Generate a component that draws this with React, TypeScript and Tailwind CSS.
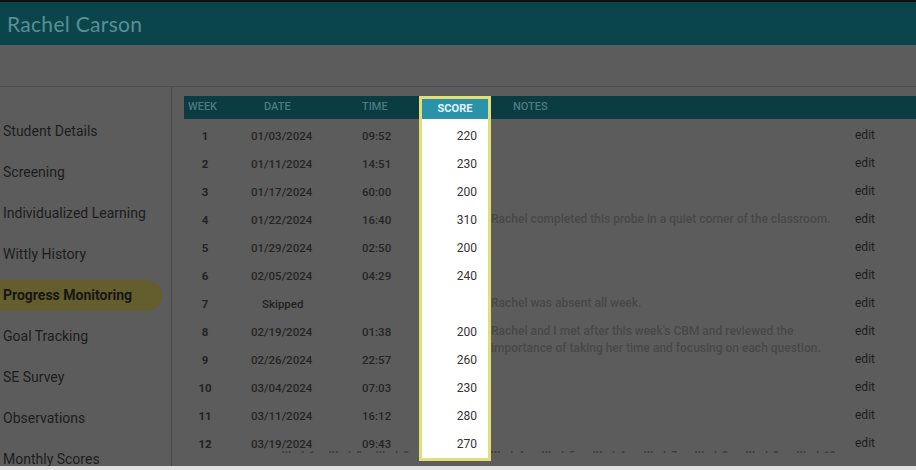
import React from 'react';

type Row = {
  week: number;
  date: string;
  time: string;
  score: string;
  notes?: string[];
};

const rows: Row[] = [
  { week: 1, date: '01/03/2024', time: '09:52', score: '220' },
  { week: 2, date: '01/11/2024', time: '14:51', score: '230' },
  { week: 3, date: '01/17/2024', time: '60:00', score: '200' },
  { week: 4, date: '01/22/2024', time: '16:40', score: '310', notes: ['Rachel completed this probe in a quiet corner of the classroom.'] },
  { week: 5, date: '01/29/2024', time: '02:50', score: '200' },
  { week: 6, date: '02/05/2024', time: '04:29', score: '240' },
  { week: 7, date: 'Skipped', time: '', score: '', notes: ['Rachel was absent all week.'] },
  {
    week: 8,
    date: '02/19/2024',
    time: '01:38',
    score: '200',
    notes: ["Rachel and I met after this week's CBM and reviewed the", 'importance of taking her time and focusing on each question.'],
  },
  { week: 9, date: '02/26/2024', time: '22:57', score: '260' },
  { week: 10, date: '03/04/2024', time: '07:03', score: '230' },
  { week: 11, date: '03/11/2024', time: '16:12', score: '280' },
  { week: 12, date: '03/19/2024', time: '09:43', score: '270' },
];

const navItems = [
  'Student Details',
  'Screening',
  'Individualized Learning',
  'Wittly History',
  'Progress Monitoring',
  'Goal Tracking',
  'SE Survey',
  'Observations',
  'Monthly Scores',
];

function Sidebar() {
  return (
    <div className="w-[172px] shrink-0 border-r border-[#474747] pt-[29px] overflow-hidden">
      {navItems.map((item) => {
        const active = item === 'Progress Monitoring';
        return (
          <div
            key={item}
            className={
              active
                ? 'h-[31px] mb-[10px] w-[162px] rounded-r-full bg-[#645d2e] pl-[3px] flex items-center text-[14px] font-bold text-[#161616]'
                : 'h-[31px] mb-[10px] pl-[3px] flex items-center text-[14px] text-[#1c1c1c]'
            }
          >
            {item}
          </div>
        );
      })}
    </div>
  );
}

function ProgressTable() {
  return (
    <div className="flex-1 pl-[12px] pt-[9px] overflow-hidden">
      {/* header bar */}
      <div className="flex h-[23px] bg-[#0b3b43] text-[11px] font-medium text-[#4d7a80]">
        <div className="w-[42px] pl-[4px] flex items-center">WEEK</div>
        <div className="w-[136px] pl-[38px] flex items-center">DATE</div>
        <div className="w-[57px] flex items-center">TIME</div>
        <div className="w-[72px] border-x-[3px] border-t-[3px] border-[#e4de78] bg-white flex">
          <div className="h-[21px] w-full bg-[#2a93aa] text-[#e4f4f6] font-bold flex items-center justify-center">
            SCORE
          </div>
        </div>
        <div className="flex-1 pl-[22px] flex items-center">NOTES</div>
      </div>

      {/* spacer keeps the highlight column continuous */}
      <div className="flex h-[3px]">
        <div className="w-[235px]"></div>
        <div className="w-[72px] border-x-[3px] border-[#e4de78] bg-white"></div>
      </div>

      {rows.map((r, i) => (
        <div key={r.week} className="flex h-[28px] text-[11.5px] leading-[17px]">
          <div className="w-[42px] pt-[6px] text-center font-bold text-[#222]">{r.week}</div>
          <div
            className={
              r.date === 'Skipped'
                ? 'w-[136px] pt-[6px] pl-[36px] font-medium text-[#222]'
                : 'w-[136px] pt-[6px] pl-[25px] font-medium text-[#252525]'
            }
          >
            {r.date}
          </div>
          <div className="w-[57px] pt-[6px] font-medium text-[#252525]">{r.time}</div>
          <div
            className={
              i === rows.length - 1
                ? 'w-[72px] h-[31px] border-x-[3px] border-b-[3px] border-[#e4de78] bg-white pt-[6px] pr-[11px] text-right text-[12px] text-[#333]'
                : 'w-[72px] border-x-[3px] border-[#e4de78] bg-white pt-[6px] pr-[11px] text-right text-[12px] text-[#333]'
            }
          >
            {r.score}
          </div>
          <div className="w-[364px] pt-[5px] text-[12px] font-medium text-[#484848] whitespace-nowrap">
            {r.notes?.map((n) => (
              <div key={n}>{n}</div>
            ))}
          </div>
          <div className="pt-[5px] text-[12px] text-[#1e1e1e]">edit</div>
        </div>
      ))}

      {/* chart axis labels peeking out underneath */}
      <div className="h-[3px] overflow-hidden flex -mt-[8px] text-[10px] leading-[12px] font-bold text-[#3c3c3c]">
        <div className="w-[98px]"></div>
        <div className="w-[137px] flex gap-[14px] overflow-hidden">
          <span>Week 1</span>
          <span>Week 2</span>
          <span>Week 3</span>
        </div>
        <div className="w-[72px]"></div>
        <div className="flex gap-[18px]">
          <span>Week 4</span>
          <span>Week 5</span>
          <span>Week 6</span>
          <span>Week 7</span>
          <span>Week 8</span>
          <span>Week 9</span>
          <span>Week 10</span>
        </div>
      </div>
    </div>
  );
}

export default function App() {
  return (
    <div className="w-[916px] h-[470px] overflow-hidden bg-[#5c5c5c] flex flex-col font-['Roboto',sans-serif]">
      <div className="h-[45px] shrink-0 border-t-2 border-[#111] bg-[#0a454c] pl-[7px] flex items-center">
        <span className="text-[21px] text-[#5a8f95] font-['Lato',sans-serif] tracking-[0.3px]">Rachel Carson</span>
      </div>
      <div className="h-[42px] shrink-0 border-b border-[#4d4d4d]"></div>
      <div className="flex flex-1 min-h-0">
        <Sidebar />
        <ProgressTable />
      </div>
      <div className="h-[4px] shrink-0 bg-[#e2e2e2]"></div>
    </div>
  );
}
